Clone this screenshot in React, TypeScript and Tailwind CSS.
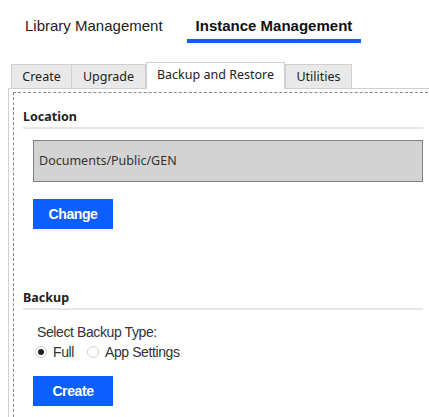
import React from "react";

const tabs = [
  { label: "Create", w: "w-[61px]" },
  { label: "Upgrade", w: "w-[74px]" },
  { label: "Backup and Restore", w: "w-[139px]", active: true },
  { label: "Utilities", w: "w-[67px]" },
];

function SectionTitle({ children }: { children: React.ReactNode }) {
  return (
    <div className="border-b-2 border-[#e6e6e6] pb-[2px] pt-[1px] font-['Noto_Sans',sans-serif] text-[12.5px] font-bold leading-[17px] text-[#222]">
      {children}
    </div>
  );
}

function Radio({ checked, label }: { checked?: boolean; label: string }) {
  return (
    <label className="flex items-center gap-[6px]">
      <span className="flex h-[12px] w-[12px] items-center justify-center rounded-full border border-[#d4d4d4] bg-white">
        {checked ? <span className="h-[6px] w-[6px] rounded-full bg-[#222]" /> : null}
      </span>
      <span>{label}</span>
    </label>
  );
}

export default function App() {
  return (
    <div className="h-[417px] w-[429px] overflow-hidden bg-white font-['Liberation_Sans',Arial,sans-serif]">
      <nav className="flex gap-[15px] pl-[16px] pt-[16px] text-[15px] leading-[20px] text-[#222]">
        <div className="border-b-4 border-transparent px-[9px] pb-[3px]">Library Management</div>
        <div className="border-b-4 border-[#0b5fff] px-[9px] pb-[3px] font-bold text-[#111]">
          Instance Management
        </div>
      </nav>

      <div className="mt-[19px] flex items-end pl-[11px] font-['Noto_Sans',sans-serif] text-[12.5px] text-[#222]">
        {tabs.map((t) =>
          t.active ? (
            <div
              key={t.label}
              className={`${t.w} relative z-10 -mb-px flex h-[27px] items-center justify-center border border-b-0 border-[#d0d0d0] bg-white pb-[1px]`}
            >
              {t.label}
            </div>
          ) : (
            <div
              key={t.label}
              className={`${t.w} flex h-[24px] items-center justify-center border border-b-0 border-[#d0d0d0] bg-[#e9e9e9] pt-[2px] [&+&]:border-l-0`}
            >
              {t.label}
            </div>
          )
        )}
      </div>

      <div className="ml-[8px] w-[430px] border border-[#d0d0d0] px-[4px] pt-[3px]">
        <div className="border border-dashed border-[#888] px-[9px] pb-[20px] pt-[14px]">
          <SectionTitle>Location</SectionTitle>
          <div className="ml-[10px] mt-[11px] flex h-[42px] items-center border border-[#808080] bg-[#d3d3d3] px-[5px] font-['Noto_Sans',sans-serif] text-[12.5px] text-[#333]">
            Documents/Public/GEN
          </div>
          <button className="ml-[10px] mt-[17px] h-[30px] w-[80px] bg-[#0b5fff] text-[14px] font-bold tracking-[-0.4px] text-white">
            Change
          </button>

          <div className="mt-[59px]">
            <SectionTitle>Backup</SectionTitle>
          </div>
          <div className="ml-[14px] mt-[14px] text-[14px] leading-[16px] tracking-[-0.4px] text-[#333]">
            Select Backup Type:
          </div>
          <div className="ml-[12px] mt-[4px] flex items-center gap-[13px] text-[14px] leading-[16px] tracking-[-0.4px] text-[#333]">
            <Radio checked label="Full" />
            <Radio label="App Settings" />
          </div>
          <button className="ml-[10px] mt-[16px] h-[30px] w-[80px] bg-[#0b5fff] text-[14px] font-bold tracking-[-0.4px] text-white">
            Create
          </button>
        </div>
      </div>
    </div>
  );
}
